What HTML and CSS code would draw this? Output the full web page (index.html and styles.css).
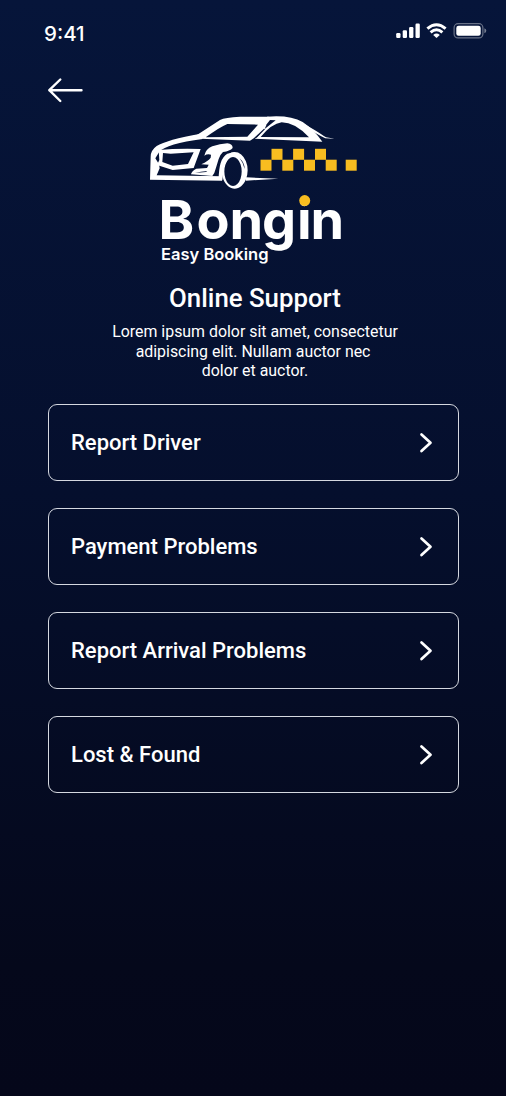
FILE: index.html
```html
<!DOCTYPE html>
<html lang="en">
<head>
<meta charset="utf-8">
<title>Online Support</title>
<link rel="stylesheet" href="styles.css">
</head>
<body>
<main class="screen">
  <header class="status">
    <span class="time">9:41</span>
    <svg class="status-icons" width="92" height="18" viewBox="396 22 92 18" fill="#fff">
      <rect x="396.2" y="33" width="4.3" height="5" rx="1.2"/>
      <rect x="402.7" y="30.3" width="4.3" height="7.7" rx="1.2"/>
      <rect x="409.1" y="27" width="4.3" height="11" rx="1.2"/>
      <rect x="415.5" y="23.6" width="4.3" height="14.4" rx="1.2"/>
      <g fill="none" stroke="#fff" stroke-width="3">
        <path d="M427.4 28.6Q436.5 20.8 445.6 28.6"/>
        <path d="M430.6 32.3Q436.5 27.3 442.4 32.3"/>
      </g>
      <path d="M433.2 34.9Q436.5 32.3 439.8 34.9L436.5 38Z"/>
      <rect x="454.1" y="23.7" width="28.8" height="14.2" rx="4" fill="none" stroke="#fff" stroke-opacity=".4" stroke-width="1.2"/>
      <rect x="456.3" y="25.8" width="24.4" height="10" rx="2.3"/>
      <path d="M484.4 28.3Q486.3 29.2 486.3 30.8T484.4 33.3Z" fill-opacity=".45"/>
    </svg>
  </header>
  <a class="back" aria-label="Back">
    <svg width="36" height="26" viewBox="47 77 36 26" fill="none" stroke="#fff" stroke-width="2.4" stroke-linecap="round" stroke-linejoin="round">
      <path d="M81.5 90.2H49.3M60.3 79.5L49.3 90.2L60.3 101"/>
    </svg>
  </a>
  <svg class="logo" width="220" height="160" viewBox="140 110 220 160">
    <g transform="translate(140 105) scale(.33333)" fill="#fff" fill-rule="evenodd">
      <path d="M165 94L240 45Q255 37 300 35L385 35L430 42Q395 58 375 78L330 107L183 101ZM197 97L322 95L354 59L262 57Q240 66 197 97Z"/>
      <path d="M380 35Q450 29 488 51Q522 74 547 110L515 109L345 101L372 76L400 45ZM362 96Q395 56 425 52Q465 52 507 97Z"/>
      <path d="M374 72L407 46L390 45L380 58Z" fill="#061236"/>
      <path d="M343 98L372 71L375 73L350 98Z" fill="#061236"/>
      <path d="M470 44Q535 80 558 97L584 101L556 100Q525 84 478 56Z"/>
      <path d="M182 86Q80 104 50 123Q32 136 32 155L30 224L246 227L247 214L50 211L59 190L57 178L46 160L58 140Q80 116 188 102Z"/>
      <path d="M56 135Q110 130 182 132L161 189L98 195L51 180L58 165ZM69 144L92 146L161 142L144 177L98 182L67 171Z"/>
      <path d="M193 152Q197 132 217 124Q240 116 262 115Q278 117 278 129Q270 138 249 141Q239 150 236 162L228 188Q224 205 217 213L153 208Q154 199 169 191L201 189L206 179L184 178Q205 168 212 158L213 149Q202 146 193 152Z"/>
      <path d="M165 204Q182 199 202 198L198 201Z" fill="#061236"/>
      <path d="M236 224Q236 160 262 146L285 141L262 166Q249 182 247 226Z"/>
      <path d="M284 141A39 55 0 1 1 283.9 141ZM279 156A26 43.5 0 1 0 279.1 156Z"/>
      <path d="M318 217L415 221L318 227Z"/>
      <path d="M299 160Q314 174 314 192Q309 172 299 160Z" fill="#061236"/>
    </g>
    <g fill="#f8bd20">
      <rect x="260.5" y="159.7" width="11" height="11"/><rect x="271.5" y="148.8" width="11" height="11"/>
      <rect x="282.3" y="159.7" width="11" height="11"/><rect x="293.1" y="148.8" width="11" height="11"/>
      <rect x="304" y="159.7" width="11" height="11"/><rect x="315" y="148.8" width="11" height="11"/>
      <rect x="325.7" y="159.7" width="11" height="11"/><rect x="345.7" y="159.7" width="11" height="11"/>
    </g>
    <text class="brand" x="158.5 196.5 229.5 262 297 310.5" y="238.5">Bongin</text>
    <circle cx="304.7" cy="200.6" r="5.5" fill="#f8bd20"/>
    <text class="tagline" x="161" y="260.3" textLength="107.5">Easy Booking</text>
  </svg>
  <h1 class="title">Online Support</h1>
  <p class="intro">Lorem ipsum dolor sit amet, consectetur<br>adipiscing elit. Nullam auctor nec&nbsp;<br>dolor et auctor.</p>
  <nav class="options">
    <a class="option">Report Driver<svg class="chevron" viewBox="0 0 14 22"><path d="M2.5 2.5L11.5 10.8L2.5 19"/></svg></a>
    <a class="option">Payment Problems<svg class="chevron" viewBox="0 0 14 22"><path d="M2.5 2.5L11.5 10.8L2.5 19"/></svg></a>
    <a class="option">Report Arrival Problems<svg class="chevron" viewBox="0 0 14 22"><path d="M2.5 2.5L11.5 10.8L2.5 19"/></svg></a>
    <a class="option">Lost &amp; Found<svg class="chevron" viewBox="0 0 14 22"><path d="M2.5 2.5L11.5 10.8L2.5 19"/></svg></a>
  </nav>
</main>
</body>
</html>
```
FILE: styles.css
```css
* { box-sizing: border-box; }
body { margin: 0; }
.screen {
  display: flex;
  flex-direction: column;
  width: 506px;
  height: 1096px;
  color: #fff;
  font-family: Roboto, sans-serif;
  background: linear-gradient(#06153a, #050f2d 45%, #05081b 88%, #05071a);
}
.status {
  display: flex;
  justify-content: space-between;
  align-items: flex-start;
  height: 77px;
  padding: 22px 18px 0 44px;
}
.time { font: 500 20.5px/24px Inter, sans-serif; }
.back { height: 33px; padding-left: 47px; }
.back svg, .logo { display: block; }
.logo { margin-left: 140px; flex: none; }
.brand {
  font: 700 54px Inter, sans-serif;
  fill: #fff;
}
.tagline { font: 600 16.5px Inter, sans-serif; fill: #fff; }
.title {
  margin: 13px 0 0;
  padding-left: 4px;
  font-size: 25.8px;
  line-height: 30px;
  font-weight: 500;
  text-align: center;
}
.intro {
  height: 60px;
  margin: 9px 0 0;
  padding-left: 4px;
  font-size: 15.9px;
  line-height: 19.7px;
  text-align: center;
}
.options {
  display: flex;
  flex-direction: column;
  gap: 27px;
  padding: 22px 47px 0 48px;
}
.option {
  display: flex;
  align-items: center;
  justify-content: space-between;
  height: 77px;
  padding: 0 25px 0 22px;
  border: 1px solid #d5d8e0;
  border-radius: 9px;
  font-size: 22px;
  font-weight: 500;
}
.chevron {
  width: 14px;
  height: 22px;
  fill: none;
  stroke: #fff;
  stroke-width: 2.7;
  stroke-linecap: round;
  stroke-linejoin: round;
}
```
